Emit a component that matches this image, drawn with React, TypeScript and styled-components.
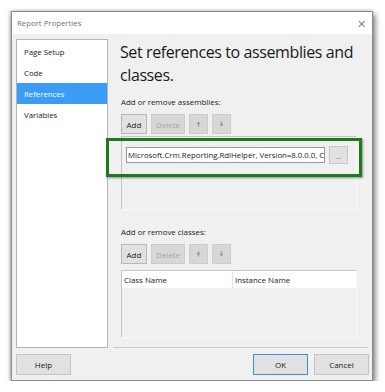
import React from "react";
import styled, { createGlobalStyle } from "styled-components";

const Global = createGlobalStyle`
  body {
    margin: 0;
    background: #ffffff;
    font-family: "Open Sans", "Noto Sans", sans-serif;
  }
`;

const Page = styled.div`
  padding: 11px 0 0 11px;
`;

const Dialog = styled.div`
  width: 362px;
  height: 370px;
  box-sizing: border-box;
  border: 1px solid #8c8c8c;
  background: #f0f0f0;
  box-shadow: 2px 3px 6px rgba(0, 0, 0, 0.55), -1px 0 3px rgba(0, 0, 0, 0.25);
  display: flex;
  flex-direction: column;
`;

const TitleBar = styled.div`
  height: 22px;
  flex-shrink: 0;
  background: #ffffff;
  display: flex;
  align-items: center;
  justify-content: space-between;
  padding: 0 6px 0 5px;
  font-size: 7.8px;
  color: #707070;
`;

const Close = styled.span`
  font-size: 11px;
  color: #8a8a8a;
  font-weight: 300;
`;

const Main = styled.div`
  display: flex;
  padding: 5px 4px 0 4px;
  height: 314px;
  flex-shrink: 0;
  box-sizing: border-box;
`;

const NavList = styled.div`
  width: 92px;
  box-sizing: border-box;
  background: #ffffff;
  border: 1px solid #b4b4b4;
  padding-top: 1px;
  display: flex;
  flex-direction: column;
`;

const NavItem = styled.div<{ $active?: boolean }>`
  height: 21px;
  display: flex;
  align-items: center;
  padding-left: 7px;
  font-size: 7.8px;
  color: ${(p) => (p.$active ? "#ffffff" : "#1a1a1a")};
  background: ${(p) => (p.$active ? "#3b9cf5" : "transparent")};
`;

const Pane = styled.div`
  flex: 1;
  margin-left: 5px;
  display: flex;
  flex-direction: column;
  border-bottom: 1px solid #c8c8c8;
  padding-left: 8px;
  position: relative;
`;

const Heading = styled.h1`
  margin: 2px 0 0 -1px;
  font-size: 16px;
  font-weight: 400;
  line-height: 23px;
  color: #1a1a1a;
  letter-spacing: -0.4px;
  white-space: nowrap;
`;

const Label = styled.div<{ $top: number }>`
  margin-top: ${(p) => p.$top}px;
  font-size: 7.9px;
  color: #1a1a1a;
  line-height: 12px;
`;

const Toolbar = styled.div`
  display: flex;
  gap: 4px;
  margin-top: 6px;
`;

const Btn = styled.button<{ $w: number; $disabled?: boolean }>`
  width: ${(p) => p.$w}px;
  height: 20px;
  padding: 0;
  box-sizing: border-box;
  font-family: inherit;
  font-size: 8px;
  border: 1px solid ${(p) => (p.$disabled ? "#cccccc" : "#b8b8b8")};
  background: ${(p) => (p.$disabled ? "#d7d7d7" : "#e1e1e1")};
  color: ${(p) => (p.$disabled ? "#a8a8a8" : "#1a1a1a")};
  display: flex;
  align-items: center;
  justify-content: center;
`;

const Panel = styled.div<{ $h: number; $top: number }>`
  margin-top: ${(p) => p.$top}px;
  width: 236px;
  height: ${(p) => p.$h}px;
  box-sizing: border-box;
  border: 1px solid #fafafa;
  border-left-color: #c4c4c4;
  border-top-color: #c4c4c4;
  background: #f0f0f0;
`;

const AsmRow = styled.div`
  display: flex;
  align-items: center;
  padding: 9px 0 0 4px;
  gap: 4px;
`;

const AsmInput = styled.div`
  width: 199px;
  height: 16px;
  box-sizing: border-box;
  background: #ffffff;
  border: 1px solid #9a9a9a;
  font-size: 7.8px;
  color: #1a1a1a;
  line-height: 14px;
  padding-left: 1px;
  white-space: nowrap;
`;

const Browse = styled.div`
  width: 19px;
  height: 18px;
  box-sizing: border-box;
  border: 1px solid #c8c8c8;
  background: #e1e1e1;
  color: #666;
  font-size: 7px;
  display: flex;
  align-items: flex-end;
  justify-content: center;
  line-height: 12px;
`;

const Highlight = styled.div`
  position: absolute;
  left: -7px;
  top: 99px;
  width: 256px;
  height: 39px;
  box-sizing: border-box;
  border: 3px solid #1f7a1f;
  box-shadow: 1px 1px 2px rgba(0, 0, 0, 0.4);
`;

const HeaderRow = styled.div`
  display: grid;
  grid-template-columns: 110px 1fr;
  height: 17px;
  background: #ffffff;
`;

const HeaderCell = styled.div<{ $divider?: boolean }>`
  font-size: 7.9px;
  color: #1a1a1a;
  display: flex;
  align-items: center;
  padding-left: 2px;
  border-left: ${(p) => (p.$divider ? "1px solid #e3e3e3" : "none")};
`;

const Footer = styled.div`
  display: flex;
  align-items: center;
  justify-content: space-between;
  padding: 6px 3px 0 4px;
`;

const FootGroup = styled.div`
  display: flex;
  gap: 6px;
`;

const FootBtn = styled.button<{ $primary?: boolean }>`
  width: 55px;
  height: 21px;
  box-sizing: border-box;
  font-family: inherit;
  font-size: 8px;
  color: #1a1a1a;
  background: #e1e1e1;
  border: 1px solid ${(p) => (p.$primary ? "#3d8fd9" : "#c4c4c4")};
  padding: 0;
`;

const Arrow = ({ up }: { up?: boolean }) => (
  <svg width="5" height="6" viewBox="0 0 5 6">
    <path
      d={up ? "M2.5 0.5 L4.5 3 L3.2 3 L3.2 5.5 L1.8 5.5 L1.8 3 L0.5 3 Z" : "M2.5 5.5 L4.5 3 L3.2 3 L3.2 0.5 L1.8 0.5 L1.8 3 L0.5 3 Z"}
      fill="#9a9a9a"
    />
  </svg>
);

const ButtonSet = () => (
  <Toolbar>
    <Btn $w={26}>Add</Btn>
    <Btn $w={34} $disabled>
      Delete
    </Btn>
    <Btn $w={19} $disabled>
      <Arrow up />
    </Btn>
    <Btn $w={19} $disabled>
      <Arrow />
    </Btn>
  </Toolbar>
);

export default function App() {
  return (
    <Page>
      <Global />
      <Dialog>
        <TitleBar>
          <span>Report Properties</span>
          <Close>✕</Close>
        </TitleBar>
        <Main>
          <NavList>
            <NavItem>Page Setup</NavItem>
            <NavItem>Code</NavItem>
            <NavItem $active>References</NavItem>
            <NavItem>Variables</NavItem>
          </NavList>
          <Pane>
            <Heading>
              Set references to assemblies and
              <br />
              classes.
            </Heading>
            <Label $top={9}>Add or remove assemblies:</Label>
            <ButtonSet />
            <Panel $h={74} $top={2}>
              <AsmRow>
                <AsmInput>Microsoft.Crm.Reporting.RdlHelper, Version=8.0.0.0, C</AsmInput>
                <Browse>...</Browse>
              </AsmRow>
            </Panel>
            <Label $top={16}>Add or remove classes:</Label>
            <ButtonSet />
            <Panel $h={68} $top={6}>
              <HeaderRow>
                <HeaderCell>Class Name</HeaderCell>
                <HeaderCell $divider>Instance Name</HeaderCell>
              </HeaderRow>
            </Panel>
            <Highlight />
          </Pane>
        </Main>
        <Footer>
          <FootBtn>Help</FootBtn>
          <FootGroup>
            <FootBtn $primary>OK</FootBtn>
            <FootBtn>Cancel</FootBtn>
          </FootGroup>
        </Footer>
      </Dialog>
    </Page>
  );
}
